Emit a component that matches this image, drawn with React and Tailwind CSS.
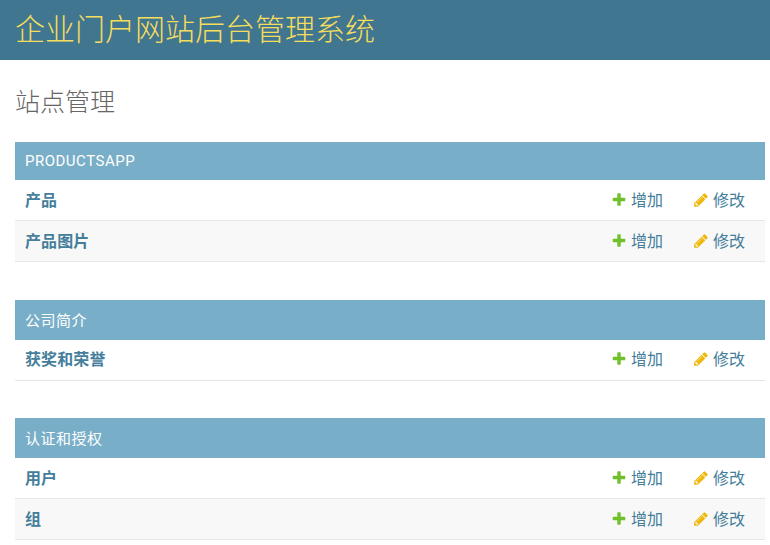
const PLUS = "M1600 736v192q0 40-28 68t-68 28h-416v416q0 40-28 68t-68 28h-192q-40 0-68-28t-28-68v-416h-416q-40 0-68-28t-28-68v-192q0-40 28-68t68-28h416v-416q0-40 28-68t68-28h192q40 0 68 28t28 68v416h416q40 0 68 28t28 68z";
const PENCIL = "M491 1536l91-91-235-235-91 91v107h128v128h107zm523-928q0-22-22-22-10 0-17 7l-542 542q-7 7-7 17 0 22 22 22 10 0 17-7l542-542q7-7 7-17zm-54-192l416 416-832 832h-416v-416zm683 96q0 53-37 90l-166 166-416-416 166-165q36-38 90-38 53 0 91 38l235 234q37 39 37 91z";

function Row({ name, alt, lift }) {
  return (
    <div className={`flex items-center h-[41px] border-b border-[#e6e6e6] pl-[10px] pr-[20px] ${lift} ${alt ? "bg-[#f8f8f8]" : "bg-white"}`}>
      <span className="flex-1 font-bold text-[16px] text-[#447e9b] pt-[2px] tracking-[0.1px]">{name}</span>
      <span className="flex items-center text-[16px] text-[#447e9b] w-[51px]">
        <svg viewBox="0 0 1792 1792" className="w-[16px] h-[16px] mr-[4px] -ml-[2px]"><path d={PLUS} fill="#70bf2b" /></svg>
        <span className="pt-[2px]">增加</span>
      </span>
      <span className="flex items-center text-[16px] text-[#447e9b] ml-[30px]">
        <svg viewBox="0 0 1792 1792" className="w-[16px] h-[16px] mr-[4px] -ml-[1px]"><path d={PENCIL} fill="#efb80b" /></svg>
        <span className="pt-[2px]">修改</span>
      </span>
    </div>
  );
}

function Section({ title, rows, h, mb, pt, lift }) {
  return (
    <section className={mb}>
      <div className={`bg-[#79aec8] text-white text-[15px] tracking-[0.5px] flex items-center pl-[10px] ${h} ${pt}`}>{title}</div>
      {rows.map((r, i) => <Row key={r} name={r} alt={i % 2 === 1} lift={lift} />)}
    </section>
  );
}

export default function App() {
  return (
    <div className="bg-white min-h-[545px] overflow-hidden font-['Roboto','Noto_Sans_CJK_SC',sans-serif]">
      <header className="h-[60px] bg-[#417690] flex items-center px-[15px]">
        <h1 className="text-[30px] font-light text-[#f5dd5d] leading-none">企业门户网站后台管理系统</h1>
      </header>
      <main className="pl-[15px] pr-[5px] pt-[27px]">
        <h2 className="text-[25px] font-light text-[#666] leading-[32px] mb-[23px]">站点管理</h2>
        <Section title="PRODUCTSAPP" h="h-[38px]" pt="" lift="" mb="mb-[38px]" rows={["产品", "产品图片"]} />
        <Section title="公司简介" h="h-[40px]" pt="pt-[2px]" lift="pb-[2px]" mb="mb-[37px]" rows={["获奖和荣誉"]} />
        <Section title="认证和授权" h="h-[40px]" pt="pt-[2px]" lift="" rows={["用户", "组"]} />
      </main>
    </div>
  );
}
